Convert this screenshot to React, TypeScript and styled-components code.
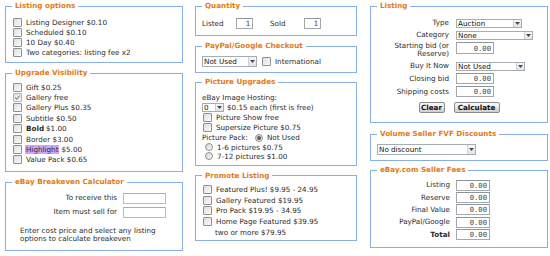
import React from 'react';
import styled, { createGlobalStyle } from 'styled-components';

const GlobalStyle = createGlobalStyle`
  html, body { margin: 0; padding: 0; background: #ffffff; }
  body {
    font-family: "DejaVu Sans", Verdana, sans-serif;
    font-size: 7.2px;
    color: #2b2b2b;
  }
`;

const Page = styled.div`
  display: flex;
  align-items: flex-start;
  width: 550px;
  height: 256px;
  box-sizing: border-box;
  padding: 1px 0 0 5px;
  overflow: hidden;
`;

const Column = styled.div<{ $w: number; $mr?: number }>`
  display: flex;
  flex-direction: column;
  flex: none;
  width: ${(p) => p.$w}px;
  margin-right: ${(p) => p.$mr ?? 0}px;
`;

const Panel = styled.fieldset<{ $pt: number; $pb: number; $mt?: number }>`
  margin: ${(p) => p.$mt ?? 0}px 0 0 0;
  padding: ${(p) => p.$pt}px 6px ${(p) => p.$pb}px 6px;
  border: 1px solid #88afdf;
  min-width: 0;
`;

const Title = styled.legend`
  padding: 0 3px;
  font-weight: bold;
  font-size: 7.2px;
  line-height: 10px;
  color: #e47a14;
  white-space: nowrap;
`;

const Row = styled.div<{ $h?: number; $indent?: number }>`
  display: flex;
  align-items: center;
  height: ${(p) => p.$h ?? 10}px;
  padding-left: ${(p) => p.$indent ?? 0}px;
  white-space: nowrap;
`;

const Box = styled.span<{ $on?: boolean }>`
  display: inline-flex;
  align-items: center;
  justify-content: center;
  flex: none;
  width: 9px;
  height: 9px;
  box-sizing: border-box;
  margin: 0 4px 0 1px;
  border: 1px solid ${(p) => (p.$on ? '#b1b1b1' : '#8e8f8f')};
  border-radius: 1px;
  background: linear-gradient(135deg, #dedede, #fbfbfb);
`;

const Dot = styled.span<{ $on?: boolean; $ml?: number }>`
  display: inline-flex;
  align-items: center;
  justify-content: center;
  flex: none;
  width: 8px;
  height: 8px;
  box-sizing: border-box;
  margin: 0 4px 0 ${(p) => p.$ml ?? 0}px;
  border: 1px solid #8e8f8f;
  border-radius: 50%;
  background: linear-gradient(135deg, #d6d6d6, #fafafa);

  &::after {
    content: '';
    display: ${(p) => (p.$on ? 'block' : 'none')};
    width: 4px;
    height: 4px;
    border-radius: 50%;
    background: radial-gradient(circle at 40% 40%, #7a7a7a, #222);
  }
`;

const Strong = styled.b`
  font-weight: bold;
  margin-right: 2px;
`;

const Mark = styled.span`
  background: #cea5f6;
  padding: 0 1px;
  margin: 0 2px 0 -1px;
  line-height: 9px;
`;

const SelectFrame = styled.div<{ $w: number; $h: number }>`
  display: flex;
  flex: none;
  width: ${(p) => p.$w}px;
  height: ${(p) => p.$h}px;
  box-sizing: border-box;
  border: 1px solid #a6acb4;
  background: #fff;
`;

const SelectValue = styled.span`
  flex: 1;
  display: flex;
  align-items: center;
  padding-left: 1px;
  overflow: hidden;
  white-space: nowrap;
  color: #111;
`;

const SelectArrow = styled.span`
  display: flex;
  align-items: center;
  justify-content: center;
  width: 7px;
  margin: 0;
  border-left: 1px solid #cdd1d6;
  background: linear-gradient(#f7f7f7, #e1e3e6);
`;

const TextBox = styled.input<{ $w: number; $h: number; $pale?: boolean }>`
  flex: none;
  width: ${(p) => p.$w}px;
  height: ${(p) => p.$h}px;
  box-sizing: border-box;
  margin: 0;
  padding: 0 2px 0 0;
  border: 1px solid ${(p) => (p.$pale ? '#b9bcc0' : '#a4a8ae')};
  border-top-color: ${(p) => (p.$pale ? '#a9adb2' : '#8f949a')};
  background: #fff;
  font-family: "DejaVu Sans Mono", "Liberation Mono", monospace;
  font-size: 7.2px;
  color: #444;
  text-align: right;
  outline: none;
`;

const Btn = styled.button<{ $w: number }>`
  width: ${(p) => p.$w}px;
  height: 11px;
  box-sizing: border-box;
  margin: 0;
  padding: 0;
  border: 1px solid #8b8b8b;
  border-radius: 2px;
  background: linear-gradient(#f7f7f7 0%, #ebebeb 50%, #dcdcdc 51%, #d0d0d0 100%);
  font-family: "DejaVu Sans", Verdana, sans-serif;
  font-weight: bold;
  font-size: 7.2px;
  color: #111;
`;

const ButtonBar = styled.div`
  display: flex;
  justify-content: center;
  gap: 9px;
  margin-top: 5px;
`;

const Form = styled.div<{ $gap: number }>`
  display: flex;
  flex-direction: column;
  gap: ${(p) => p.$gap}px;
`;

const FormRow = styled.div<{ $h: number; $top?: boolean; $gap?: number }>`
  display: flex;
  align-items: ${(p) => (p.$top ? 'flex-start' : 'center')};
  gap: ${(p) => p.$gap ?? 7}px;
  height: ${(p) => p.$h}px;
`;

const FormLabel = styled.span<{ $w: number; $bold?: boolean }>`
  flex: none;
  width: ${(p) => p.$w}px;
  text-align: right;
  line-height: 7.5px;
  font-weight: ${(p) => (p.$bold ? 'bold' : 'normal')};
`;

const QtyLabel = styled.span`
  width: 34px;
  flex: none;
`;

const Spacer = styled.span<{ $w: number }>`
  width: ${(p) => p.$w}px;
  flex: none;
`;

const Note = styled.p`
  margin: 9px 0 0 0;
  padding-left: 8px;
  line-height: 8px;
`;

const Arrow = () => (
  <svg width="5" height="3" viewBox="0 0 5 3">
    <path d="M0 0H5L2.5 3Z" fill="#4a4a4a" />
  </svg>
);

const Select = ({ w, h, value }: { w: number; h: number; value: string }) => (
  <SelectFrame $w={w} $h={h}>
    <SelectValue>{value}</SelectValue>
    <SelectArrow>
      <Arrow />
    </SelectArrow>
  </SelectFrame>
);

const Check = ({ on }: { on?: boolean }) => (
  <Box $on={on}>
    {on && (
      <svg width="7" height="7" viewBox="0 0 7 7">
        <path d="M1.2 3.6L2.8 5.2L5.8 1.6" stroke="#8a8a8a" strokeWidth="1.1" fill="none" />
      </svg>
    )}
  </Box>
);

const listingOptions = [
  'Listing Designer $0.10',
  'Scheduled $0.10',
  '10 Day $0.40',
  'Two categories: listing fee x2',
];

const promote = [
  'Featured Plus! $9.95 - 24.95',
  'Gallery Featured $19.95',
  'Pro Pack $19.95 - 34.95',
  'Home Page Featured $39.95',
];

const fees = ['Listing', 'Reserve', 'Final Value', 'PayPal/Google', 'Total'];

export default function App() {
  return (
    <>
      <GlobalStyle />
      <Page>
        <Column $w={178} $mr={12}>
          <Panel $pt={6} $pb={5}>
            <Title>Listing options</Title>
            {listingOptions.map((t) => (
              <Row key={t}>
                <Check />
                {t}
              </Row>
            ))}
          </Panel>

          <Panel $pt={4} $pb={6} $mt={5}>
            <Title>Upgrade Visibility</Title>
            <Row $h={10.4}><Check />Gift $0.25</Row>
            <Row $h={10.4}><Check on />Gallery free</Row>
            <Row $h={10.4}><Check />Gallery Plus $0.35</Row>
            <Row $h={10.4}><Check />Subtitle $0.50</Row>
            <Row $h={10.4}><Check /><Strong>Bold</Strong>$1.00</Row>
            <Row $h={10.4}><Check />Border $3.00</Row>
            <Row $h={10.4}><Check /><Mark>Highlight</Mark>$5.00</Row>
            <Row $h={10.4}><Check />Value Pack $0.65</Row>
          </Panel>

          <Panel $pt={5.5} $pb={7} $mt={5}>
            <Title>eBay Breakeven Calculator</Title>
            <Form $gap={3}>
              <FormRow $h={11} $gap={6}>
                <FormLabel $w={105}>To receive this</FormLabel>
                <TextBox $w={43} $h={11} $pale readOnly />
              </FormRow>
              <FormRow $h={11} $gap={6}>
                <FormLabel $w={105}>Item must sell for</FormLabel>
                <TextBox $w={43} $h={11} $pale readOnly />
              </FormRow>
            </Form>
            <Note>
              Enter cost price and select any listing
              <br />
              options to calculate breakeven
            </Note>
          </Panel>
        </Column>

        <Column $w={162} $mr={13}>
          <Panel $pt={7} $pb={6}>
            <Title>Quantity</Title>
            <Row $h={11}>
              <QtyLabel>Listed</QtyLabel>
              <TextBox $w={17} $h={11} value="1" readOnly />
              <Spacer $w={17} />
              <QtyLabel>Sold</QtyLabel>
              <TextBox $w={17} $h={11} value="1" readOnly />
            </Row>
          </Panel>

          <Panel $pt={5} $pb={5} $mt={5}>
            <Title>PayPal/Google Checkout</Title>
            <Row $h={11}>
              <Select w={55} h={11} value="Not Used" />
              <Spacer $w={4} />
              <Check />
              International
            </Row>
          </Panel>

          <Panel $pt={5} $pb={4} $mt={4}>
            <Title>Picture Upgrades</Title>
            <Row>eBay Image Hosting:</Row>
            <Row $h={10.5}>
              <Select w={22} h={9} value="0" />
              <Spacer $w={3} />
              $0.15 each (first is free)
            </Row>
            <Row><Check />Picture Show free</Row>
            <Row><Check />Supersize Picture $0.75</Row>
            <Row>
              Picture Pack:
              <Dot $on $ml={7} />
              Not Used
            </Row>
            <Row $h={9}><Dot $ml={3} />1-6 pictures $0.75</Row>
            <Row $h={9}><Dot $ml={3} />7-12 pictures $1.00</Row>
          </Panel>

          <Panel $pt={3.5} $pb={2} $mt={5}>
            <Title>Promote Listing</Title>
            {promote.map((t) => (
              <Row key={t} $h={10.75}>
                <Check />
                {t}
              </Row>
            ))}
            <Row $h={10.75} $indent={13}>two or more $79.95</Row>
          </Panel>
        </Column>

        <Column $w={178}>
          <Panel $pt={7} $pb={9}>
            <Title>Listing</Title>
            <Form $gap={2}>
              <FormRow $h={10}>
                <FormLabel $w={72}>Type</FormLabel>
                <Select w={66} h={9} value="Auction" />
              </FormRow>
              <FormRow $h={10}>
                <FormLabel $w={72}>Category</FormLabel>
                <Select w={77} h={9} value="None" />
              </FormRow>
              <FormRow $h={17} $top>
                <FormLabel $w={72}>
                  Starting bid (or
                  <br />
                  Reserve)
                </FormLabel>
                <TextBox $w={38} $h={12} value="0.00" readOnly />
              </FormRow>
              <FormRow $h={10}>
                <FormLabel $w={72}>Buy It Now</FormLabel>
                <Select w={69} h={9} value="Not Used" />
              </FormRow>
              <FormRow $h={11}>
                <FormLabel $w={72}>Closing bid</FormLabel>
                <TextBox $w={38} $h={11} value="0.00" readOnly />
              </FormRow>
              <FormRow $h={11}>
                <FormLabel $w={72}>Shipping costs</FormLabel>
                <TextBox $w={38} $h={11} value="0.00" readOnly />
              </FormRow>
            </Form>
            <ButtonBar>
              <Btn $w={26}>Clear</Btn>
              <Btn $w={46}>Calculate</Btn>
            </ButtonBar>
          </Panel>

          <Panel $pt={5} $pb={5} $mt={6}>
            <Title>Volume Seller FVF Discounts</Title>
            <Select w={99} h={11} value="No discount" />
          </Panel>

          <Panel $pt={4.5} $pb={7} $mt={4}>
            <Title>eBay.com Seller Fees</Title>
            <Form $gap={1.4}>
              {fees.map((f) => (
                <FormRow key={f} $h={11} $gap={6}>
                  <FormLabel $w={73} $bold={f === 'Total'}>{f}</FormLabel>
                  <TextBox $w={34} $h={11} value="0.00" readOnly />
                </FormRow>
              ))}
            </Form>
          </Panel>
        </Column>
      </Page>
    </>
  );
}
